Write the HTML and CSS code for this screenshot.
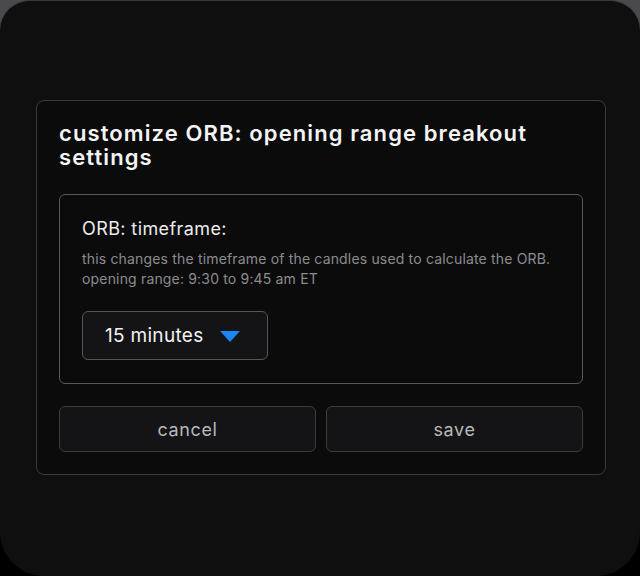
FILE: index.html
```html
<!DOCTYPE html>
<html>
<head>
<meta charset="utf-8">
<link rel="stylesheet" href="styles.css">
</head>
<body>
<div class="frame">
  <div class="dialog">
    <h1 class="title">customize ORB: opening range breakout settings</h1>
    <div class="card">
      <div class="label">ORB: timeframe:</div>
      <p class="desc">this changes the timeframe of the candles used to calculate the ORB.<br>opening range: 9:30 to 9:45 am ET</p>
      <div class="select">
        <span class="select-text">15 minutes</span>
        <svg class="caret" width="20" height="12" viewBox="0 0 20 12"><path d="M0 0H20L10 11Z" fill="#1a86f5"/></svg>
      </div>
    </div>
    <div class="actions">
      <button class="btn">cancel</button>
      <button class="btn">save</button>
    </div>
  </div>
</div>
</body>
</html>
```

FILE: styles.css
```css
html, body {
  margin: 0;
  padding: 0;
}
body {
  width: 640px;
  height: 576px;
  background: linear-gradient(#4a4a4c 0 50%, #000 50% 100%);
  font-family: "Inter", "Liberation Sans", sans-serif;
}
.frame {
  box-sizing: border-box;
  width: 640px;
  height: 576px;
  background: #0f0f10;
  border-top: 1px solid #3a3a3c;
  border-radius: 30px 30px 44px 44px;
  padding: 99px 34px 0 36px;
}
.dialog {
  box-sizing: border-box;
  width: 570px;
  background: #0b0b0c;
  border: 1px solid #3a3a3d;
  border-radius: 8px;
  padding: 20px 22px 22px 22px;
}
.title {
  margin: 0;
  font-size: 22px;
  line-height: 24px;
  font-weight: 600;
  color: #f4f4f4;
  letter-spacing: 1.1px;
}
.card {
  margin-top: 25px;
  border: 1px solid #58585c;
  border-radius: 6px;
  padding: 23px 22px 23px 22px;
}
.label {
  font-size: 18px;
  line-height: 22px;
  color: #ececec;
  letter-spacing: 0.4px;
}
.desc {
  margin: 9px 0 0 0;
  font-size: 14px;
  line-height: 20px;
  color: #8c8c8e;
  letter-spacing: 0.17px;
}
.select {
  margin-top: 22px;
  box-sizing: border-box;
  width: 186px;
  height: 49px;
  border: 1px solid #55555a;
  border-radius: 6px;
  background: #141416;
  display: flex;
  align-items: center;
  padding-left: 22px;
  gap: 17px;
}
.select-text {
  font-size: 19px;
  color: #f2f2f2;
  letter-spacing: 0.3px;
}
.caret {
  margin-top: 2px;
}
.actions {
  margin-top: 22px;
  display: flex;
  gap: 10px;
}
.btn {
  flex: 1;
  height: 46px;
  background: #141416;
  border: 1px solid #3c3c40;
  border-radius: 6px;
  color: #b8b8b8;
  font-family: "Inter", "Liberation Sans", sans-serif;
  font-size: 18px;
  letter-spacing: 0.6px;
  padding: 0;
}
```
